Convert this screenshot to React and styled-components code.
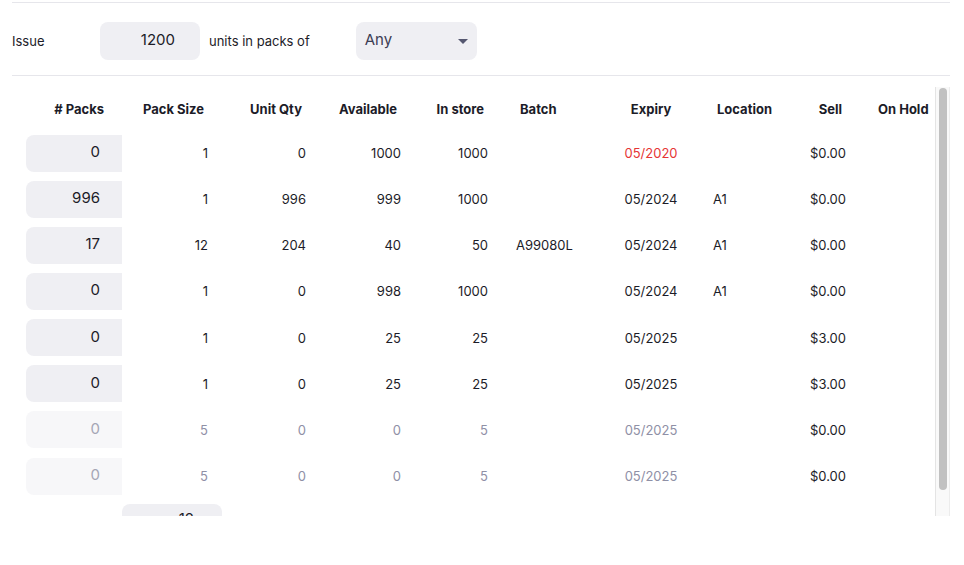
import React from "react";
import styled, { createGlobalStyle } from "styled-components";

const GlobalStyle = createGlobalStyle`
  html, body {
    margin: 0;
    padding: 0;
    background: #ffffff;
  }
  body {
    font-family: Inter, "Noto Sans", "Liberation Sans", sans-serif;
    color: #1c1c28;
  }
`;

const columns = [
  { key: "packs", label: "# Packs", width: 110, align: "right" },
  { key: "packSize", label: "Pack Size", width: 100, align: "right" },
  { key: "unitQty", label: "Unit Qty", width: 98, align: "right" },
  { key: "available", label: "Available", width: 95, align: "right" },
  { key: "inStore", label: "In store", width: 87, align: "right" },
  { key: "batch", label: "Batch", width: 101, align: "left" },
  { key: "expiry", label: "Expiry", width: 96, align: "center" },
  { key: "location", label: "Location", width: 81, align: "left" },
  { key: "sell", label: "Sell", width: 80, align: "right" },
  { key: "onHold", label: "On Hold", width: 75, align: "left" },
];

const rows = [
  { packs: 0, packSize: 1, unitQty: 0, available: 1000, inStore: 1000, batch: "", expiry: "05/2020", expired: true, location: "", sell: "$0.00" },
  { packs: 996, packSize: 1, unitQty: 996, available: 999, inStore: 1000, batch: "", expiry: "05/2024", location: "A1", sell: "$0.00" },
  { packs: 17, packSize: 12, unitQty: 204, available: 40, inStore: 50, batch: "A99080L", expiry: "05/2024", location: "A1", sell: "$0.00" },
  { packs: 0, packSize: 1, unitQty: 0, available: 998, inStore: 1000, batch: "", expiry: "05/2024", location: "A1", sell: "$0.00" },
  { packs: 0, packSize: 1, unitQty: 0, available: 25, inStore: 25, batch: "", expiry: "05/2025", location: "", sell: "$3.00" },
  { packs: 0, packSize: 1, unitQty: 0, available: 25, inStore: 25, batch: "", expiry: "05/2025", location: "", sell: "$3.00" },
  { packs: 0, packSize: 5, unitQty: 0, available: 0, inStore: 5, batch: "", expiry: "05/2025", location: "", sell: "$0.00", disabled: true },
  { packs: 0, packSize: 5, unitQty: 0, available: 0, inStore: 5, batch: "", expiry: "05/2025", location: "", sell: "$0.00", disabled: true },
];

export default function App() {
  return (
    <>
      <GlobalStyle />
      <Page>
        <IssueRow>
          <Label>Issue</Label>
          <QtyInput defaultValue="1200" />
          <Text>units in packs of</Text>
          <Select>
            <span>Any</span>
            <svg width="10" height="5" viewBox="0 0 10 5">
              <path d="M0 0h10L5 5z" fill="#555770" />
            </svg>
          </Select>
        </IssueRow>
        <Scroller>
          <TableArea>
            <Table>
              <colgroup>
                {columns.map((c) => (
                  <col key={c.key} style={{ width: c.width }} />
                ))}
              </colgroup>
              <thead>
                <tr>
                  {columns.map((c) => (
                    <Th key={c.key} $align={c.align}>
                      {c.label}
                    </Th>
                  ))}
                </tr>
              </thead>
              <tbody>
                {rows.map((r, i) => (
                  <tr key={i}>
                    <PackCell>
                      <PackInput defaultValue={r.packs} $disabled={r.disabled} />
                    </PackCell>
                    <Td $align="right" $muted={r.disabled}>{r.packSize}</Td>
                    <Td $align="right" $muted={r.disabled}>{r.unitQty}</Td>
                    <Td $align="right" $muted={r.disabled}>{r.available}</Td>
                    <Td $align="right" $muted={r.disabled}>{r.inStore}</Td>
                    <Td $align="left" $muted={r.disabled}>{r.batch}</Td>
                    <Td $align="center" $muted={r.disabled} $red={r.expired}>
                      {r.expiry}
                    </Td>
                    <Td $align="left" $muted={r.disabled}>{r.location}</Td>
                    <Td $align="right">{r.sell}</Td>
                    <Td $align="left" />
                  </tr>
                ))}
                <tr>
                  <Td />
                  <PackCell $flush>
                    <TotalInput defaultValue="12" />
                  </PackCell>
                  <Td colSpan={8} />
                </tr>
              </tbody>
            </Table>
          </TableArea>
          <ScrollTrack>
            <ScrollThumb />
          </ScrollTrack>
        </Scroller>
      </Page>
    </>
  );
}

const Page = styled.div`
  padding: 2px 14px 0 12px;
`;

const IssueRow = styled.div`
  display: flex;
  align-items: center;
  padding: 19px 0 15px;
  border-top: 1px solid #e6e6eb;
  border-bottom: 1px solid #e6e6eb;
  font-size: 13px;
`;

const Label = styled.span`
  width: 88px;
`;

const Text = styled.span`
  margin: 0 46px 0 9px;
`;

const QtyInput = styled.input`
  box-sizing: border-box;
  width: 100px;
  height: 38px;
  border: none;
  outline: none;
  border-radius: 8px;
  background: #efeff3;
  font-family: inherit;
  font-size: 15px;
  color: #1c1c28;
  text-align: right;
  padding: 0 25px 4px 0;
`;

const Select = styled.div`
  box-sizing: border-box;
  width: 121px;
  height: 38px;
  border-radius: 8px;
  background: #efeff3;
  display: flex;
  align-items: center;
  justify-content: space-between;
  padding: 0 9px 4px 9px;
  font-size: 15px;
  color: #3d3d54;
  svg {
    margin-top: 4px;
  }
`;

const Scroller = styled.div`
  margin-top: 11px;
  height: 429px;
  display: flex;
  overflow: hidden;
`;

const TableArea = styled.div`
  flex: 1;
  overflow: hidden;
`;

const ScrollTrack = styled.div`
  box-sizing: border-box;
  width: 15px;
  flex-shrink: 0;
  padding: 1px 2px 0 3px;
  background: #f9f9f9;
  border-left: 1px solid #e4e4e4;
  border-right: 1px solid #ececec;
`;

const ScrollThumb = styled.div`
  height: 402px;
  border-radius: 5px;
  background: #c1c1c1;
`;

const Table = styled.table`
  width: 923px;
  table-layout: fixed;
  border-collapse: collapse;
  font-size: 13px;
`;

const Th = styled.th`
  height: 43px;
  padding: 0 18px;
  font-weight: 700;
  color: #1c1c28;
  text-align: ${(p) => p.$align};
  white-space: nowrap;
  vertical-align: middle;
`;

const Td = styled.td`
  height: 46.15px;
  padding: 0 14px;
  text-align: ${(p) => p.$align || "left"};
  color: ${(p) => (p.$red ? "#e63535" : p.$muted ? "#8f90a6" : "#1c1c28")};
  white-space: nowrap;
  vertical-align: middle;
`;

const PackCell = styled.td`
  height: 46.15px;
  padding: ${(p) => (p.$flush ? "5px 0 0" : "0 0 0 14px")};
  vertical-align: ${(p) => (p.$flush ? "top" : "middle")};
  overflow: hidden;
`;

const PackInput = styled.input`
  box-sizing: border-box;
  display: block;
  width: 96px;
  height: 37px;
  border: none;
  outline: none;
  border-radius: 8px 0 0 8px;
  background: ${(p) => (p.$disabled ? "#f7f7f9" : "#efeff3")};
  font-family: inherit;
  font-size: 15px;
  color: ${(p) => (p.$disabled ? "#a5a6b5" : "#1c1c28")};
  text-align: right;
  padding: 0 22px 3px 0;
`;

const TotalInput = styled(PackInput)`
  width: 100px;
  border-radius: 8px;
  padding: 0 28px 8px 0;
`;
